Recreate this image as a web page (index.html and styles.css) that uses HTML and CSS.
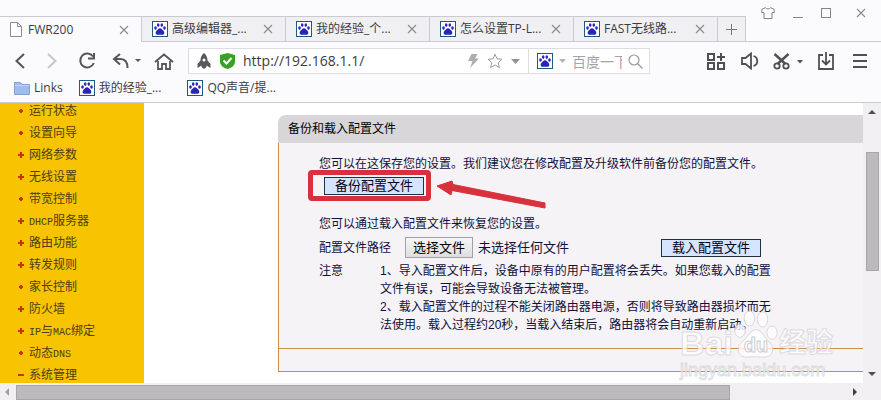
FILE: index.html
```html
<!DOCTYPE html>
<html lang="zh-CN">
<head>
  <meta charset="utf-8">
  <title>FWR200</title>
  <link rel="stylesheet" href="styles.css">
</head>
<body>
  <svg class="defs" aria-hidden="true">
    <symbol id="paw" viewBox="0 0 16 16">
      <rect x="0.5" y="0.5" width="15" height="15" fill="#fff" stroke="#1d5c80"/>
      <g fill="#2a24b8">
        <ellipse cx="3.5" cy="7" rx="1.3" ry="1.7"/>
        <ellipse cx="6.2" cy="4.1" rx="1.3" ry="1.8"/>
        <ellipse cx="9.8" cy="4.1" rx="1.3" ry="1.8"/>
        <ellipse cx="12.5" cy="7" rx="1.3" ry="1.7"/>
        <path d="M8 7.200c1.6 0 2 1.300 3.200 2.300 1.6 1.400 1.600 4.300-.8 4.300H5.600c-2.400 0-2.400-2.900-.8-4.300C6 8.500 6.400 7.200 8 7.200z"/>
      </g>
    </symbol>
    <symbol id="close" viewBox="0 0 10 10">
      <path d="M1 1l8 8M9 1l-8 8" fill="none" stroke="#8a8a8c" stroke-width="1.1"/>
    </symbol>
  </svg>

  <header class="chrome">
    <div class="tabbar">
      <div class="tab active">
        <svg width="12" height="15" viewBox="0 0 12 15"><path d="M.5.500h7l4 4v10H.500zM7.500.500v4h4" fill="#fff" stroke="#8c8c8e"/></svg>
        <span>FWR200</span>
        <button class="tab-close" aria-label="关闭"><svg width="10" height="10"><use href="#close"/></svg></button>
      </div>
      <div class="tab">
        <svg width="16" height="16"><use href="#paw"/></svg>
        <span>高级编辑器_...</span>
        <button class="tab-close" aria-label="关闭"><svg width="10" height="10"><use href="#close"/></svg></button>
      </div>
      <div class="tab">
        <svg width="16" height="16"><use href="#paw"/></svg>
        <span>我的经验_个...</span>
        <button class="tab-close" aria-label="关闭"><svg width="10" height="10"><use href="#close"/></svg></button>
      </div>
      <div class="tab">
        <svg width="16" height="16"><use href="#paw"/></svg>
        <span>怎么设置TP-L...</span>
        <button class="tab-close" aria-label="关闭"><svg width="10" height="10"><use href="#close"/></svg></button>
      </div>
      <div class="tab">
        <svg width="16" height="16"><use href="#paw"/></svg>
        <span>FAST无线路...</span>
        <button class="tab-close" aria-label="关闭"><svg width="10" height="10"><use href="#close"/></svg></button>
      </div>
      <button class="new-tab" aria-label="新标签"><svg width="11" height="11" viewBox="0 0 11 11"><path d="M5.500 0v11M0 5.500h11" stroke="#77777a"/></svg></button>
      <div class="window-buttons">
        <button aria-label="皮肤"><svg width="14" height="12" viewBox="0 0 14 12"><path d="M4.500.700L1 2.200.600 5.500H3v6h8v-6h2.400L13 2.200 9.500.700C8.500 2.300 5.500 2.300 4.500.700z" fill="none" stroke="#858588"/></svg></button>
        <button aria-label="最小化"><svg width="10" height="12" viewBox="0 0 10 12"><path d="M0 10.500h10" stroke="#858588"/></svg></button>
        <button aria-label="最大化"><svg width="10" height="10" viewBox="0 0 10 10"><rect x=".5" y=".5" width="9" height="9" fill="none" stroke="#858588"/></svg></button>
        <button aria-label="关闭窗口"><svg width="10" height="10"><use href="#close"/></svg></button>
      </div>
    </div>

    <div class="toolbar">
      <button class="back" aria-label="后退"><svg width="12" height="16" viewBox="0 0 12 16"><path d="M10 1L2.500 8l7.500 7" fill="none" stroke="#55555a" stroke-width="2"/></svg></button>
      <button class="forward" aria-label="前进"><svg width="12" height="16" viewBox="0 0 12 16"><path d="M2 1l7.500 7L2 15" fill="none" stroke="#c6c6ca" stroke-width="2"/></svg></button>
      <button class="reload" aria-label="刷新"><svg width="18" height="18" viewBox="0 0 18 18"><path d="M15 4.500A7 7 0 1 0 15.800 11M16 1v5.500h-6" fill="none" stroke="#55555a" stroke-width="2"/></svg></button>
      <button class="undo" aria-label="撤销"><svg width="30" height="18" viewBox="0 0 30 18"><path d="M8 2L2 7l6 5.500M2 7h6.500c5 0 7 3.500 7 9" fill="none" stroke="#55555a" stroke-width="2"/><path d="M23 7h6l-3 3z" fill="#55555a"/></svg></button>
      <button class="home" aria-label="主页"><svg width="20" height="17" viewBox="0 0 20 17"><path d="M1 9l9-7.500L19 9M4 8v8h4v-5h4v5h4V8" fill="none" stroke="#55555a" stroke-width="1.800"/></svg></button>

      <div class="address">
        <svg width="16" height="16" viewBox="0 0 16 16"><path d="M8 0C5.500 2 4.500 4.500 4.500 7.500L1.500 11v4l4-2.500V14L8 16l2.500-2v-1.500l4 2.500v-4l-3-3.500C11.500 4.500 10.500 2 8 0z" fill="#58585d"/><circle cx="8" cy="7" r="1.500" fill="#fff"/></svg>
        <svg width="15" height="16" viewBox="0 0 15 16"><path d="M7.500 0L15 2v6.500c0 4-3.500 6.500-7.500 7.500C3.500 15 0 12.500 0 8.500V2z" fill="#3ba028"/><path d="M3.500 7.500l3 3 5-5.500" fill="none" stroke="#fff" stroke-width="2"/></svg>
        <input type="text" aria-label="网址" value="http://192.168.1.1/">
        <svg width="11" height="14" viewBox="0 0 11 14"><path d="M3.500 0H9.500L7 4.500H11L2 14l2.500-7H0z" fill="#adadb0"/></svg>
        <svg width="16" height="16" viewBox="0 0 16 16"><path d="M8 1.200l2 4.600 5 .5-3.800 3.300 1.200 5L8 12l-4.400 2.600 1.200-5L1 6.300l5-.5z" fill="none" stroke="#9d9da0"/></svg>
        <svg width="9" height="5" viewBox="0 0 9 5"><path d="M0 0h9L4.500 5z" fill="#929296"/></svg>
      </div>
      <div class="search">
        <svg width="16" height="16"><use href="#paw"/></svg>
        <svg width="7" height="4" viewBox="0 0 7 4"><path d="M0 0h7L3.500 4z" fill="#b4b4b8"/></svg>
        <input type="text" aria-label="搜索" placeholder="百度一下">
        <svg width="15" height="15" viewBox="0 0 15 15"><circle cx="6" cy="6" r="5" fill="none" stroke="#97979a" stroke-width="1.200"/><path d="M9.500 9.500l5 5" stroke="#97979a" stroke-width="1.200"/></svg>
      </div>

      <div class="tools">
        <button class="apps" aria-label="应用"><svg width="18" height="17" viewBox="0 0 18 17"><path d="M1 1h6v6H1zM1 10h6v6H1zM11 10h6v6h-6zM10 4h8M14 0v8" fill="none" stroke="#505054" stroke-width="2"/></svg></button>
        <button class="sound" aria-label="声音"><svg width="18" height="18" viewBox="0 0 18 18"><path d="M1 6h3.500L10 1.500v15L4.500 12H1z" fill="none" stroke="#505054" stroke-width="1.800"/><path d="M12.500 4c5 1.500 5 8.500 0 10" fill="none" stroke="#505054" stroke-width="1.800"/></svg></button>
        <button class="cut" aria-label="截图"><svg width="30" height="17" viewBox="0 0 30 17"><path d="M1.500 1l11 10M15.500 1l-11 10" stroke="#505054" stroke-width="2.400"/><circle cx="4" cy="13" r="2.700" fill="none" stroke="#505054" stroke-width="1.800"/><circle cx="13" cy="13" r="2.700" fill="none" stroke="#505054" stroke-width="1.800"/><path d="M24 7h6l-3 3.500z" fill="#505054"/></svg></button>
        <button class="download" aria-label="下载"><svg width="16" height="18" viewBox="0 0 16 18"><path d="M5 3H1v14h14V3h-4M8 0v12M4 8.500l4 4 4-4" fill="none" stroke="#505054" stroke-width="1.800"/></svg></button>
        <button class="menu-button" aria-label="菜单"><svg width="14" height="14" viewBox="0 0 14 14"><path d="M0 1h14M0 7h14M0 13h14" stroke="#505054" stroke-width="2"/></svg></button>
      </div>
    </div>

    <nav class="bookmarks">
      <a href="#"><svg width="16" height="14" viewBox="0 0 16 14"><path d="M.5 1.500h6l1.500 2h7.500v10H.500z" fill="#9dbdeb" stroke="#82a2d4"/><path d="M1 4.500h14" stroke="#c2d6f4"/></svg>Links</a>
      <a href="#"><svg width="16" height="16"><use href="#paw"/></svg>我的经验_...</a>
      <a href="#"><svg width="16" height="16"><use href="#paw"/></svg>QQ声音/提...</a>
    </nav>
  </header>

  <div class="viewport">
    <main class="page">
      <ul class="menu">
        <li><a href="#">运行状态</a></li>
        <li><a href="#">设置向导</a></li>
        <li class="plus"><a href="#">网络参数</a></li>
        <li class="plus"><a href="#">无线设置</a></li>
        <li><a href="#">带宽控制</a></li>
        <li class="plus"><a href="#"><span class="latin">DHCP</span>服务器</a></li>
        <li class="plus"><a href="#">路由功能</a></li>
        <li class="plus"><a href="#">转发规则</a></li>
        <li><a href="#">家长控制</a></li>
        <li class="plus"><a href="#">防火墙</a></li>
        <li class="plus"><a href="#"><span class="latin">IP</span>与<span class="latin">MAC</span>绑定</a></li>
        <li><a href="#">动态<span class="latin">DNS</span></a></li>
        <li class="minus"><a href="#">系统管理</a></li>
      </ul>

      <section class="panel">
        <h1>备份和载入配置文件</h1>
        <form class="panel-body">
          <p>您可以在这保存您的设置。我们建议您在修改配置及升级软件前备份您的配置文件。</p>
          <div class="backup">
            <button type="button" class="btn">备份配置文件</button>
            <svg class="arrow" width="112" height="32" viewBox="0 0 112 32"><path d="M1 9l15-5 1 3.500L109 26v5L16 13.500 15 18z" fill="#d8303c" stroke="#d8303c" stroke-linejoin="round"/></svg>
          </div>
          <p>您可以通过载入配置文件来恢复您的设置。</p>
          <div class="file-row">
            <label class="name" for="config">配置文件路径</label>
            <div class="file">
              <span class="file-button">选择文件</span>
              <span>未选择任何文件</span>
              <input type="file" id="config">
            </div>
            <button type="button" class="btn">载入配置文件</button>
          </div>
          <div class="note">
            <span>注意</span>
            <div>
              <p>1、导入配置文件后，设备中原有的用户配置将会丢失。如果您载入的配置文件有误，可能会导致设备无法被管理。</p>
              <p>2、载入配置文件的过程不能关闭路由器电源，否则将导致路由器损坏而无法使用。载入过程约20秒，当载入结束后，路由器将会自动重新启动。</p>
            </div>
          </div>
        </form>
        <div class="panel-foot"></div>
      </section>

      <div class="watermark">
        <div class="logo">
          <span>Bai</span>
          <span class="foot">
            <svg width="46" height="49" viewBox="0 0 48 52"><g fill="#fff" fill-opacity=".75" stroke="#cfcdd2" stroke-opacity=".8"><ellipse cx="7" cy="22" rx="5.500" ry="7"/><ellipse cx="17" cy="9" rx="5.500" ry="8"/><ellipse cx="31" cy="10" rx="5.500" ry="8"/><ellipse cx="41" cy="24" rx="5.500" ry="7"/><path d="M24 21c7 0 8 8 14 13s5 16-5 16c-6 0-12-1-18 0-10 1-13-10-6-16 7-5 8-13 15-13z"/></g></svg>
            <b>du</b>
          </span>
          <span class="cn">经验</span>
        </div>
        <div class="site">jingyan.baidu.com</div>
      </div>
    </main>

    <div class="vscroll">
      <svg width="8" height="4" viewBox="0 0 8 4"><path d="M0 4h8L4 0z" fill="#505050"/></svg>
      <div class="track"><div class="thumb"></div></div>
      <svg width="8" height="4" viewBox="0 0 8 4"><path d="M0 0h8L4 4z" fill="#505050"/></svg>
    </div>
  </div>

  <div class="hscroll">
    <svg width="4" height="8" viewBox="0 0 4 8"><path d="M4 0v8L0 4z" fill="#a0a0a0"/></svg>
    <div class="track"><div class="thumb"></div></div>
    <svg width="4" height="8" viewBox="0 0 4 8"><path d="M0 0v8l4-4z" fill="#404040"/></svg>
  </div>
</body>
</html>
```

FILE: styles.css
```css
* {
  box-sizing: border-box;
}

body {
  margin: 0;
  height: 100vh;
  display: flex;
  flex-direction: column;
  overflow: hidden;
  font: 12px/18px "Liberation Sans", "Noto Sans CJK SC", sans-serif;
  color: #10103c;
  background: #fff;
}

.defs {
  display: none;
}

svg {
  display: block;
  flex-shrink: 0;
}

p {
  margin: 0;
}

a {
  color: inherit;
  text-decoration: none;
}

button {
  font: inherit;
  border: none;
  padding: 0;
  background: none;
}

input {
  min-width: 0;
  border: none;
  padding: 0;
  outline: none;
  background: none;
}

/* browser frame */
.chrome {
  background: #fbfafd;
  border-bottom: 1px solid #cccace;
  color: #3c3c40;
  font-family: "Open Sans", "Noto Sans CJK SC", sans-serif;
}

.tabbar {
  display: flex;
  align-items: flex-end;
  height: 42px;
  border-bottom: 1px solid #cccace;
}

.tab {
  display: flex;
  align-items: center;
  flex: 0 1 144px;
  height: 25px;
  gap: 4px;
  padding: 0 12px 0 10px;
  background: #f0eff2;
  border-top: 1px solid #cccace;
  border-right: 1px solid #cccace;
  white-space: nowrap;
}

.tab.active {
  flex-basis: 142px;
  height: 26px;
  gap: 6px;
  margin-bottom: -1px;
  background: #fbfafd;
}

.tab-close {
  margin-left: auto;
}

.new-tab {
  display: flex;
  align-items: center;
  justify-content: center;
  width: 28px;
  height: 25px;
  background: #f0eff2;
  border-top: 1px solid #cccace;
  border-right: 1px solid #cccace;
}

.window-buttons {
  display: flex;
  align-items: center;
  align-self: flex-start;
  gap: 18px;
  height: 26px;
  margin-left: auto;
  padding-right: 15px;
}

.window-buttons button:last-child {
  margin-left: 7px;
}

.toolbar {
  display: flex;
  align-items: center;
  height: 38px;
  padding: 0 4px;
}

.toolbar button {
  display: flex;
  align-items: center;
  justify-content: center;
  width: 34px;
  height: 26px;
}

.toolbar .back,
.toolbar .forward,
.toolbar .home {
  width: 32px;
}

.toolbar .reload {
  width: 38px;
}

.toolbar .undo,
.toolbar .cut {
  width: 42px;
}

.address,
.search {
  display: flex;
  align-items: center;
  height: 26px;
  background: #fff;
  border: 1px solid #dddce0;
}

.address {
  flex: 1;
  gap: 8px;
  margin-left: 8px;
  padding: 0 8px 0 7px;
}

.address input {
  flex: 1;
  font: 14px/20px "Open Sans", sans-serif;
  color: #3c3c40;
}

.search {
  width: 122px;
  gap: 6px;
  margin-left: -1px;
  padding: 0 6px 0 8px;
}

.search input {
  flex: 1;
  font: 14px/20px "Noto Sans CJK SC", sans-serif;
}

.search input::placeholder {
  color: #a4a4a8;
}

.tools {
  display: flex;
  margin-left: 49px;
}

.bookmarks {
  display: flex;
  align-items: center;
  gap: 26px;
  height: 22px;
  padding: 0 14px 6px;
}

.bookmarks a {
  display: flex;
  align-items: center;
  gap: 4px;
}

.bookmarks a:first-child {
  margin-right: -10px;
}

/* router page */
.viewport {
  flex: 1;
  display: flex;
  min-height: 0;
}

.page {
  position: relative;
  flex: 1;
  display: flex;
  align-items: flex-start;
  min-width: 0;
  overflow: hidden;
}

.menu {
  display: flex;
  flex-direction: column;
  gap: 6px;
  flex: 0 0 144px;
  min-height: 100%;
  margin: 0;
  padding: 0 0 0 18px;
  list-style: none;
  line-height: 16px;
  color: #4c4010;
  background: #f8c301;
}

.menu li {
  display: flex;
  align-items: center;
  gap: 5px;
  height: 16px;
}

.menu li::before {
  content: "";
  width: 6px;
  height: 6px;
  background:
    linear-gradient(#cc3010, #cc3010) center / 4px 2px no-repeat,
    linear-gradient(#cc3010, #cc3010) center / 2px 4px no-repeat;
}

.menu li.plus::before {
  background:
    linear-gradient(#cc3010, #cc3010) center / 6px 2px no-repeat,
    linear-gradient(#cc3010, #cc3010) center / 2px 6px no-repeat;
}

.menu li.minus::before {
  background: linear-gradient(#cc3010, #cc3010) center / 6px 2px no-repeat;
}

.latin {
  font-family: "Liberation Mono", monospace;
  font-size: 10px;
  line-height: 1;
}

.panel {
  flex: 1;
  margin: 12px 0 0 134px;
}

.panel h1 {
  margin: 0;
  padding: 0 10px;
  font-size: 12px;
  font-weight: normal;
  line-height: 28px;
  color: #000;
  background: #d8d6d9;
  border-top-left-radius: 8px;
}

.panel-body {
  display: flex;
  flex-direction: column;
  gap: 4px;
  padding: 12px 0 14px 40px;
  background: #f5f3f6;
  border-left: 1px solid #cc8e48;
}

.backup {
  position: relative;
  display: flex;
  margin: 0 0 16px 5px;
}

/* marker round the backup button */
.backup::before {
  content: "";
  box-sizing: border-box;
  position: absolute;
  left: -16px;
  top: -7px;
  width: 123px;
  height: 31px;
  border: 5px solid #d8303c;
  border-radius: 4px;
}

.arrow {
  position: absolute;
  left: 112px;
  top: 0;
}

.btn {
  width: 100px;
  height: 18px;
  font-size: 13px;
  line-height: 16px;
  color: #000020;
  background: #d6e5ff;
  border: 1px solid #1c3440;
}

.file-row {
  display: flex;
  align-items: center;
  max-width: 442px;
}

.name {
  width: 86px;
}

.file {
  position: relative;
  display: flex;
  align-items: center;
  gap: 5px;
  font-size: 13px;
}

.file input {
  position: absolute;
  inset: 0;
  width: 100%;
  opacity: 0;
}

.file-button {
  padding: 0 7px;
  line-height: 19px;
  color: #000;
  background: linear-gradient(#f6f6f6, #dedede);
  border: 1px solid #a2a2a4;
}

.file-row .btn {
  margin-left: auto;
}

.note {
  display: grid;
  grid-template-columns: 61px 1fr;
  max-width: 456px;
}

.panel-foot {
  height: 24px;
  background: #f5f3f6;
  border: 1px solid #cc8e48;
  border-right: none;
}

.watermark {
  position: absolute;
  right: 30px;
  bottom: 2px;
  color: rgba(255, 255, 255, 0.75);
  font-family: "Liberation Sans", "Noto Sans CJK SC", sans-serif;
  font-weight: bold;
  -webkit-text-stroke: 1px rgba(200, 198, 204, 0.6);
  pointer-events: none;
}

.logo {
  display: flex;
  align-items: flex-end;
  justify-content: space-between;
  font-size: 34px;
  line-height: 32px;
}

.foot {
  position: relative;
}

.foot b {
  position: absolute;
  left: 0;
  right: 0;
  bottom: 4px;
  font-size: 20px;
  line-height: 20px;
  text-align: center;
  -webkit-text-stroke-color: #cfcdd2;
}

.cn {
  font-size: 27px;
}

.site {
  font-size: 18px;
  font-weight: normal;
  line-height: 22px;
}

/* scrollbars */
.vscroll {
  display: flex;
  flex-direction: column;
  align-items: center;
  justify-content: space-between;
  gap: 7px;
  width: 18px;
  padding: 7px 0;
  background: #f1eff2;
}

.track {
  flex: 1;
}

.thumb {
  background: #bcbabd;
  border: 1px solid #a8a6a9;
}

.vscroll .track {
  display: flex;
  flex-direction: column;
  padding-top: 31px;
}

.vscroll .thumb {
  width: 13px;
  height: 56%;
}

.hscroll {
  display: flex;
  align-items: center;
  gap: 7px;
  height: 17px;
  padding: 0 24px 0 5px;
  background: #f1eff2;
}

.hscroll .track {
  align-self: flex-end;
}

.hscroll .thumb {
  width: 86%;
  height: 15px;
}
```
